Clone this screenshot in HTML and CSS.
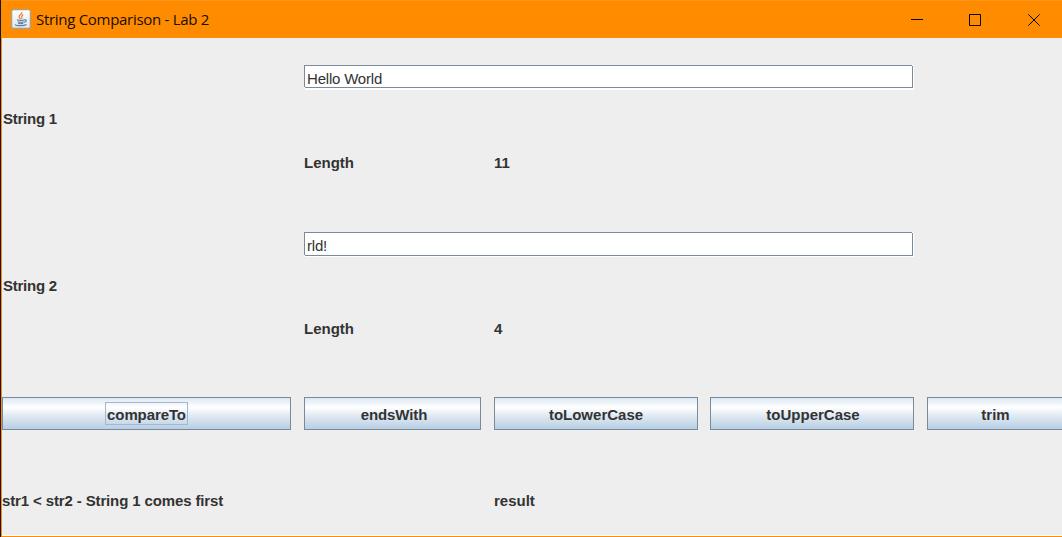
FILE: index.html
```html
<!DOCTYPE html>
<html lang="en">
<head>
<meta charset="utf-8">
<title>String Comparison - Lab 2</title>
<link rel="stylesheet" href="styles.css">
</head>
<body>
<div class="window">
  <header class="titlebar">
    <svg class="app-icon" width="20" height="20" viewBox="0 0 20 20">
      <defs><linearGradient id="tile" x2="0" y2="1"><stop offset="0" stop-color="#fff"/><stop offset="1" stop-color="#dfe5e9"/></linearGradient></defs>
      <rect x=".75" y=".75" width="18.5" height="18.5" rx="1.5" fill="url(#tile)" stroke="#8b9fae"/>
      <path d="M10.8 3c1 2-3.3 3-2.6 5 .2.8 1 1.2 1.4 2M12.3 5.6C9.2 7 11.8 8 10.5 9.7" fill="none" stroke="#ee8438" stroke-width="1.3"/>
      <path d="M6 10.7c2 .7 5.5.7 7.5 0M6.7 12.7c2 .7 4.5.7 6 0M7.2 14.3c1.5.6 3.5.6 5 0M13.5 10.8c2.6-.5 2.2 2-.3 2.6M4.5 15.3c-1.5 1.3 7.5 2.2 11 .2" fill="none" stroke="#537ca0" stroke-width="1.1"/>
    </svg>
    <span class="title">String Comparison - Lab 2</span>
    <div class="controls">
      <svg width="12" height="12" viewBox="0 0 12 12"><path d="M0 5.5H12"/></svg>
      <svg width="12" height="12" viewBox="0 0 12 12"><path d="M.5.5H11.5V11.5H.5Z"/></svg>
      <svg class="close" width="12" height="12" viewBox="0 0 12 12"><path d="M.3.3 11.7 11.7M11.7.3.3 11.7"/></svg>
    </div>
  </header>
  <main class="form">
    <div class="field field-first">Hello World</div>
    <div class="label indent row-2 col-1">String 1</div>
    <div class="label row-3 col-2">Length</div>
    <div class="label row-3 col-3">11</div>
    <div class="field field-second">rld!</div>
    <div class="label indent row-5 col-1">String 2</div>
    <div class="label row-6 col-2">Length</div>
    <div class="label row-6 col-3">4</div>
    <button class="button compare"><span class="focus">compareTo</span></button>
    <button class="button ends">endsWith</button>
    <button class="button">toLowerCase</button>
    <button class="button upper">toUpperCase</button>
    <button class="button">trim</button>
    <div class="label status row-8 col-1">str1 &lt; str2 - String 1 comes first</div>
    <div class="label row-8 col-3">result</div>
  </main>
</div>
</body>
</html>
```
FILE: styles.css
```css
* { box-sizing: border-box; }
body {
  margin: 0;
  height: 537px;
  overflow: hidden;
  background: #141414;
  padding-left: 1px;
  font-family: "Liberation Sans", Arial, sans-serif;
}
.window {
  height: 537px;
  overflow: hidden;
  background: #eee;
  border-left: 1px solid #ff8c00;
  border-bottom: 1px solid #ff8c00;
  box-shadow: inset 0 -1px #fff;
}
.titlebar {
  display: flex;
  align-items: center;
  height: 38px;
  padding: 0 22px 0 9px;
  background: #ff8c00;
  border-top: 1px solid #ff9419;
}
.app-icon { flex: none; margin-top: -1px; }
.title {
  margin: -2px 0 0 5px;
  font: 15px/20px "Open Sans", sans-serif;
  letter-spacing: -0.29px;
  color: #170d00;
  white-space: nowrap;
}
.controls { display: flex; gap: 46px; margin: 0 0 0 auto; }
.controls svg { fill: none; stroke: #000; stroke-width: 1; }
.controls .close { margin-left: 1px; }
.form {
  display: grid;
  grid-template-columns: 290px 178px 204px 205px 137px;
  grid-template-rows: 45px 44px 78px 45px 43px 77px 95px 18px;
  column-gap: 12px;
  align-items: start;
  padding-top: 27px;
}
.label, .button {
  font-weight: bold;
  font-size: 15px;
  line-height: 18px;
  color: #333;
  white-space: nowrap;
}
.indent { padding-left: 1px; letter-spacing: -0.25px; }
.status { letter-spacing: -0.13px; }
.row-2 { grid-row: 2; }
.row-3 { grid-row: 3; }
.row-5 { grid-row: 5; }
.row-6 { grid-row: 6; }
.row-8 { grid-row: 8; }
.col-1 { grid-column: 1; }
.col-2 { grid-column: 2; }
.col-3 { grid-column: 3; }
.field {
  grid-column: 2 / 5;
  width: 609px;
  padding: 3px 2px 0;
  /* bevel gaps at the bottom-left and top-right corners */
  background:
    linear-gradient(#fff, #fff) 0 100% / 1px 1px no-repeat border-box,
    linear-gradient(#fff, #fff) 100% 0 / 1px 1px no-repeat border-box,
    linear-gradient(#7a8a99, #7a8a99) 0 0 / 100% 1px no-repeat border-box,
    linear-gradient(#7a8a99, #7a8a99) 0 0 / 1px 100% no-repeat border-box,
    linear-gradient(#7a8a99, #7a8a99) 0 100% / 100% 1px no-repeat border-box,
    linear-gradient(#7a8a99, #7a8a99) 100% 0 / 1px 100% no-repeat border-box,
    #fff;
  border: 1px solid transparent;
  font-size: 15px;
  line-height: 20px;
  letter-spacing: -0.2px;
  color: #333;
}
.field-first { grid-row: 1; height: 23px; box-shadow: 1px 2px #fff; }
.field-second { grid-row: 4; height: 24px; box-shadow: 1px 1px #fff; }
.button {
  grid-row: 7;
  height: 33px;
  margin: 0;
  padding: 2px 0 0;
  border: 1px solid #7a8a99;
  border-radius: 0;
  font-family: inherit;
  background: linear-gradient(#dde8f3 0%, #fff 30%, #dfe9f2 58%, #b8cfe5 100%);
}
.compare { width: 289px; }
.ends { width: 177px; padding-left: 3px; letter-spacing: -0.1px; }
.upper { width: 204px; padding-left: 2px; }
.focus {
  display: inline-block;
  height: 23px;
  margin-top: -3px;
  padding: 3px 1px 0;
  border: 1px solid #a3b8cc;
  letter-spacing: -0.1px;
}
```
